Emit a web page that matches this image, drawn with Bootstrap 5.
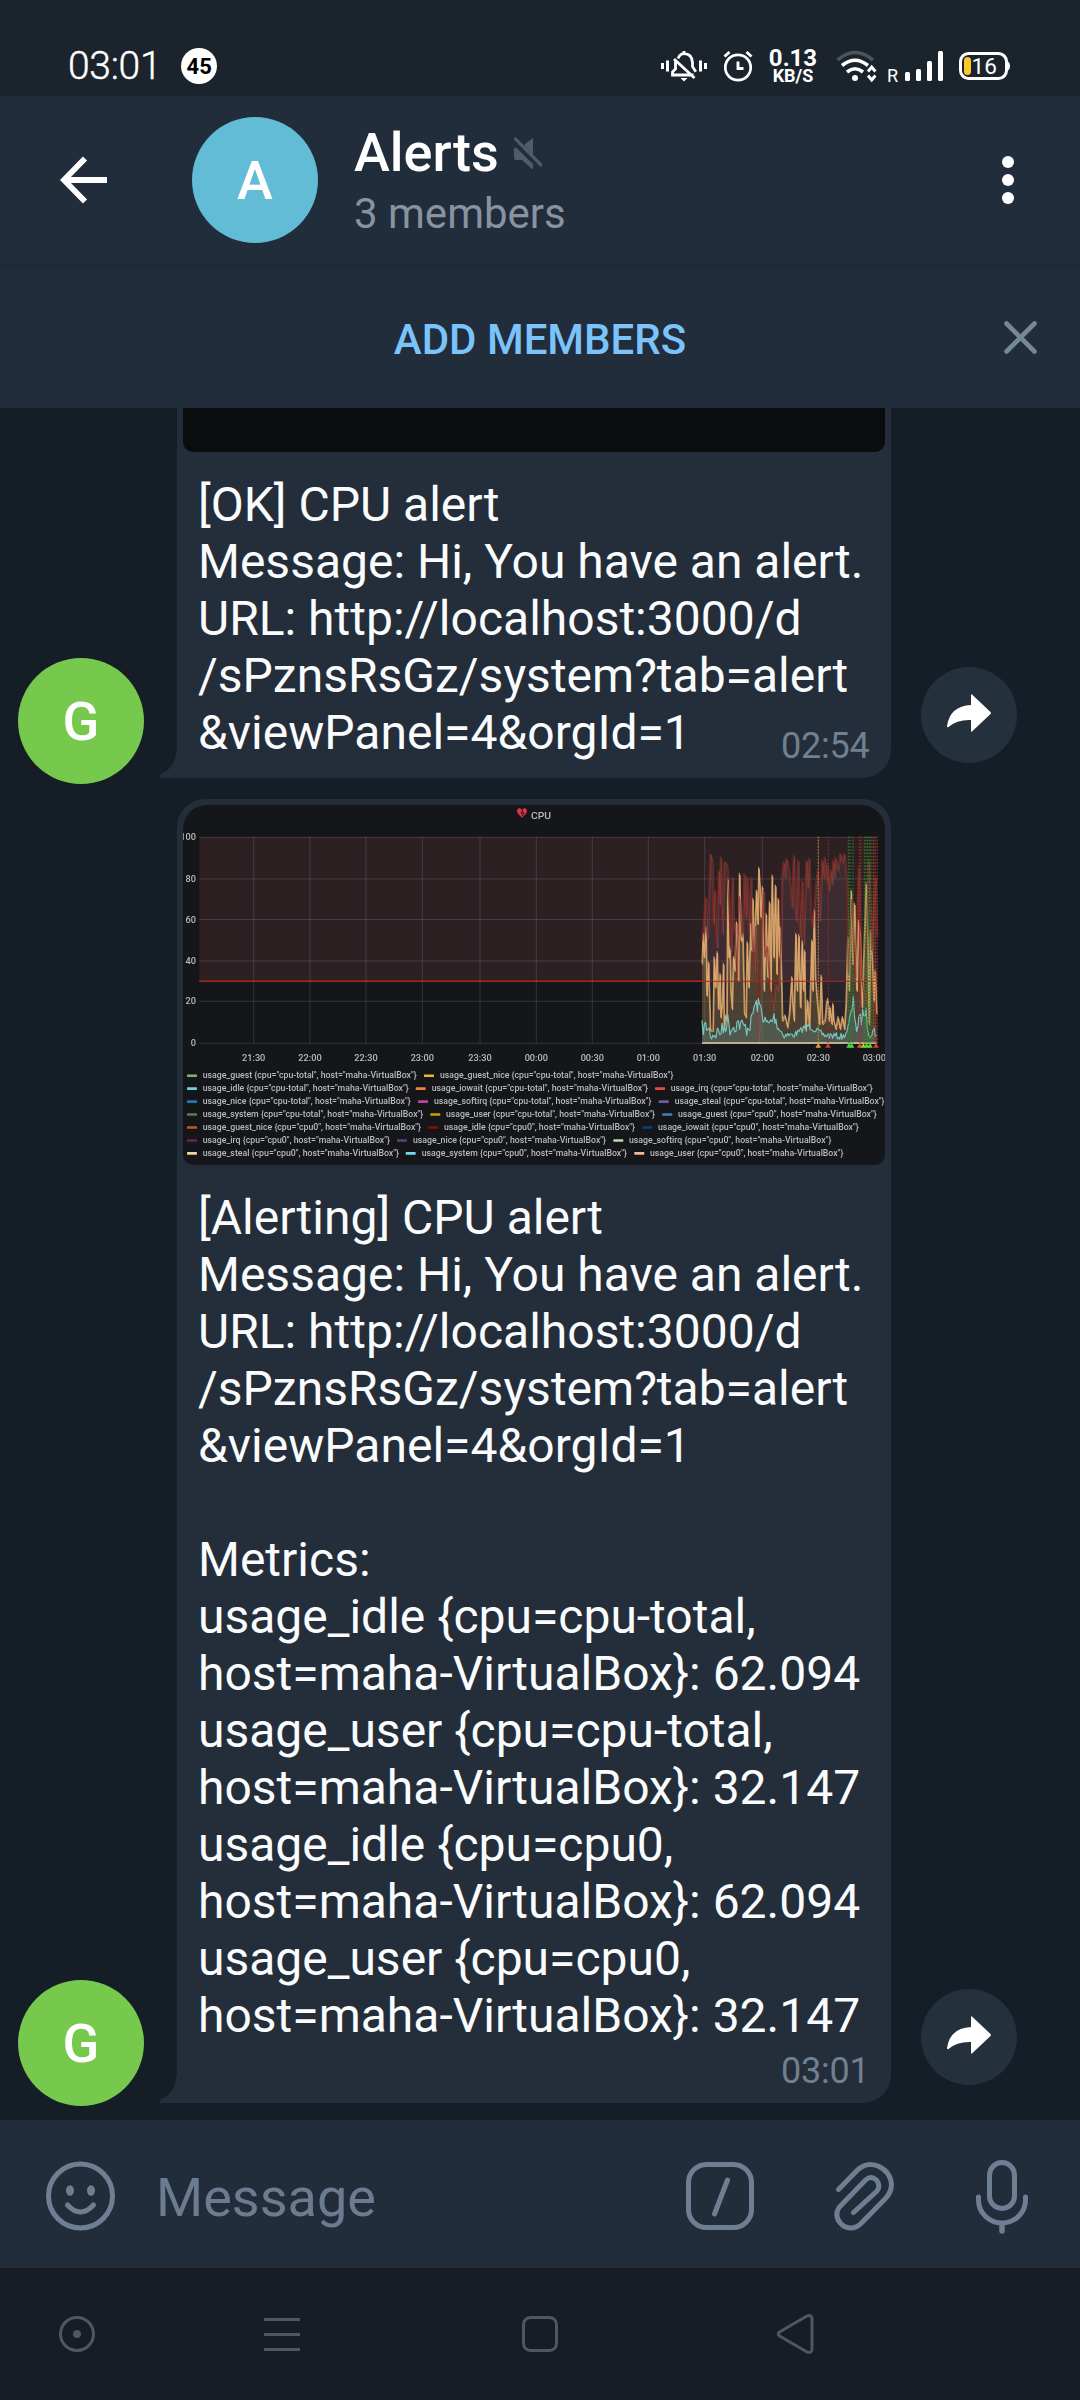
<!DOCTYPE html>
<html lang="en" data-bs-theme="dark">
<head>
<meta charset="utf-8">
<meta name="viewport" content="width=device-width, initial-scale=1">
<title>Alerts</title>
<link href="https://cdn.jsdelivr.net/npm/bootstrap@5.3.0/dist/css/bootstrap.min.css" rel="stylesheet">
<style>
  body { width:1080px; height:2400px; overflow:hidden; background:#161d26; font-family:Roboto,"Noto Sans",sans-serif; color:#fafbfc; }
  svg { display:block; flex:none; }
  .statusbar { height:96px; background:#1b242d; padding:48px 70px 0 68px; }
  .clock { font-size:39px; line-height:36px; font-weight:300; letter-spacing:-.3px; -webkit-text-stroke:.4px #fff; }
  .count { width:36px; height:36px; margin-left:20px; background:#fff; color:#000; font-size:22px; font-weight:700; }
  .rate { width:50px; font-weight:700; line-height:1; text-align:center; }
  .rate-num { font-size:24px; line-height:20px; }
  .rate-unit { font-size:18px; line-height:16px; }
  .topbar { height:168px; background:#212d3b; padding-left:60px; padding-right:60px; }
  .face { width:126px; height:126px; border-radius:50%; font-size:54px; font-weight:500; color:#fff; flex:none; }
  .face-a { background:#62bcd6; margin-left:85px; }
  .face-g { background:#77c94e; margin-left:18px; margin-bottom:-6px; }
  .chat-title { font-size:54px; line-height:62px; font-weight:500; color:#fff; }
  .chat-sub { font-size:42px; line-height:50px; color:#8793a0; margin-top:5px; }
  .addbar { height:144px; background:#212d3b; border-top:3px solid #1e2935; padding-right:43px; }
  .add-label { font-size:42px; font-weight:500; color:#7bc3fb; padding:4px 0 0 76px; }
  .feed { height:1712px; background:#151e27; overflow:hidden; }
  .bubble { position:relative; width:714px; margin-left:33px; background:#232e3a; padding:0 6px 11px; border-radius:28px 28px 28px 0; flex:none; }
  .bubble.cut { border-top-left-radius:0; border-top-right-radius:0; }
  .tail { position:absolute; left:-17px; bottom:0; }
  .shot-cut { height:44px; background:#0a0c0e; border-radius:0 0 10px 10px; }
  .shot { height:360px; background:#141619; border-radius:24px 24px 10px 10px; overflow:hidden; }
  .copy { padding:24px 0 0 15px; font-size:48px; line-height:57px; white-space:nowrap; }
  .stamp { font-size:36px; line-height:42px; color:#708090; padding-left:598px; margin-top:6px; letter-spacing:-.2px; }
  .stamp.inline-stamp { margin-top:-36px; }
  .share { width:96px; height:96px; border-radius:50%; background:#24303c; margin-left:30px; flex:none; }
  .next-msg { margin-top:21px; }
  .composer { height:148px; background:#212d3b; padding:3px 52px 0 46px; }
  .composer-text { font-size:54px; color:#6b7c90; margin-left:40px; line-height:64px; padding-top:4px; }
  .sysnav { height:132px; padding-left:58px; }
</style>
</head>
<body>
<div class="statusbar d-flex align-items-start text-white">
  <span class="clock">03:01</span>
  <span class="count rounded-circle d-flex align-items-center justify-content-center">45</span>
  <div class="ms-auto d-flex align-items-center">
    <svg width="46" height="36" viewBox="0 0 46 36" fill="none" stroke="#fff" stroke-width="2.8">
      <path d="M1.5 15v6M6.5 12.500v11M39.500 12.500v11M44.500 15v6" stroke-width="3"/>
      <path d="M17 10.500q2-4.800 6-4.800 8 0 8.500 9v4l3.300 5M14.500 12q0 5 0 9l-3 3v3h21M23 3v3M13 11l20.500 19" />
      <path d="M19.500 30h7l-3.500 3.500z" fill="#fff" stroke="none"/>
    </svg>
    <svg class="ms-3" width="30" height="36" viewBox="0 0 30 36" fill="none" stroke="#fff" stroke-width="2.700">
      <circle cx="15" cy="19.500" r="12.700"/><path d="M15 13.500v7h5.500M1.500 8.500l5-4.500M28.500 8.500l-5-4.500" stroke-width="2.900"/>
    </svg>
    <div class="rate" style="margin-left:15px"><div class="rate-num">0.13</div><div class="rate-unit">KB/S</div></div>
    <svg style="margin-left:18px" width="44" height="36" viewBox="0 0 44 36" fill="none" stroke="#fff" stroke-width="3.600">
      <path d="M1.500 12Q19 -3 37 12" stroke="#4b555e"/>
      <path d="M6 17.500q13-10.500 26 0M11 24q8-6.500 16 0"/>
      <circle cx="19" cy="30" r="3" fill="#fff" stroke="none"/>
      <path d="M32 23.500l3.700-4.500 3.700 4.500M32 27.500l3.700 4.500 3.700-4.500" stroke-width="3"/>
    </svg>
    <svg style="margin-left:7px" width="60" height="36" viewBox="0 0 60 36" fill="#fff">
      <text x="0" y="34" font-size="18" font-family="Roboto,sans-serif">R</text>
      <rect x="18" y="24" width="5" height="9" rx="1.500"/><rect x="29" y="21" width="5" height="12" rx="1.500"/><rect x="40" y="13" width="5" height="20" rx="1.500"/><rect x="51" y="3" width="5" height="30" rx="1.500"/>
    </svg>
    <svg style="margin-left:12px" width="51" height="36" viewBox="0 0 51 36">
      <rect x="1.500" y="5.500" width="46" height="25" rx="8" fill="none" stroke="#fff" stroke-width="3"/>
      <path d="M48 13q3 1 3 5t-3 5z" fill="#fff"/>
      <rect x="5" y="9" width="7" height="18" rx="3.500" fill="#fbc926"/>
      <text x="12.500" y="26" font-size="22.500" font-family="Roboto,sans-serif" fill="#fff">16</text>
    </svg>
  </div>
</div>

<header class="topbar d-flex align-items-center">
  <svg width="47" height="48" viewBox="0 0 47 48" fill="none" stroke="#fff" stroke-width="5.800"><path d="M47 24H6M25 2.500L4 24l21 21.500"/></svg>
  <div class="face face-a d-flex align-items-center justify-content-center">A</div>
  <div style="margin-left:36px">
    <div class="chat-title d-flex align-items-center">Alerts
      <svg style="margin-left:15px" width="28" height="32" viewBox="0 0 28 32" fill="#4d5d69"><path d="M0 11h2.500L19 27v5h-1L8 23H2q-2 0-2-2zM10 8l9-7v17z"/><path d="M1.500 2l25.500 26" stroke="#4d5d69" stroke-width="3.200" stroke-linecap="round"/></svg>
    </div>
    <div class="chat-sub">3 members</div>
  </div>
  <svg class="ms-auto" style="margin-right:6px" width="12" height="48" viewBox="0 0 12 48" fill="#fff"><circle cx="6" cy="6" r="6"/><circle cx="6" cy="24" r="6"/><circle cx="6" cy="42" r="6"/></svg>
</header>

<div class="addbar d-flex align-items-center">
  <div class="add-label flex-grow-1 text-center">ADD MEMBERS</div>
  <svg width="33" height="33" viewBox="0 0 33 33" stroke="#748899" stroke-width="4.600" stroke-linecap="round"><path d="M2.500 2.500l28 28M30.500 2.500l-28 28"/></svg>
</div>

<main class="feed">
  <div class="d-flex align-items-end">
    <div class="face face-g d-flex align-items-center justify-content-center">G</div>
    <div class="bubble cut">
      <svg class="tail" width="18" height="36" viewBox="0 0 18 36" fill="#232e3a"><path d="M17 0v1Q17 26 1 32q-2 2 0 4h17V0z"/></svg>
      <div class="shot-cut"></div>
      <div class="copy">[OK] CPU alert<br>Message: Hi, You have an alert.<br>URL: http://localhost:3000/d<br>/sPznsRsGz/system?tab=alert<br>&amp;viewPanel=4&amp;orgId=1</div>
      <div class="stamp inline-stamp">02:54</div>
    </div>
    <div class="share d-flex align-items-center justify-content-center" style="margin-bottom:15px">
      <svg width="44" height="38" viewBox="0 0 44 38" fill="#fff" style="margin-top:-4px"><path d="M24 1q0-1 1-.5L43.500 18q.8 1 0 2L25 37.500q-1 .5-1-.5V26Q10 25.500 1.500 33 0 34 0 32 3 12 24 11z"/></svg>
    </div>
  </div>

  <div class="next-msg d-flex align-items-end">
    <div class="face face-g d-flex align-items-center justify-content-center" style="margin-bottom:-3px">G</div>
    <div class="bubble" style="padding-top:6px">
      <svg class="tail" width="18" height="36" viewBox="0 0 18 36" fill="#232e3a"><path d="M17 0v1Q17 26 1 32q-2 2 0 4h17V0z"/></svg>
      <div class="shot">
        <svg id="chart" width="702" height="360" viewBox="0 0 702 360" font-family="Roboto,sans-serif" font-size="9.200" font-weight="500" fill="#b9bbbe" style="filter:blur(.35px)">
          <path d="M330 6c2-3 5-2 5 1 0 3-4 5-5 7-1-2-5-4-5-7 0-3 3-4 5-1z" transform="translate(9 -1)" fill="#e0314c"/>
          <path d="M340 5l-2 3h3l-2 3" stroke="#141619" stroke-width="1" fill="none"/>
          <text x="348" y="13.700" font-size="9.800" textLength="20" lengthAdjust="spacingAndGlyphs">CPU</text>
          <rect x="16.300" y="32" width="677.400" height="144.300" fill="#2d2023"/>
          <g id="grid" stroke="#c8c8dc" stroke-opacity=".17" stroke-width="1"></g>
          <g id="series" transform="translate(347 -15) scale(.33333)" fill="none" stroke-linejoin="round"></g>
          <path d="M16.300 176.300H521" stroke="#a52b20" stroke-width="1.400"/>
          <path d="M521 176.300H693" stroke="#a52b20" stroke-width="1.200" stroke-opacity=".8"/>
          <g id="marks"></g>
          <g id="axis"></g>
          <g id="legend" font-size="8.600"></g>
        </svg>
      </div>
      <div class="copy">[Alerting] CPU alert<br>Message: Hi, You have an alert.<br>URL: http://localhost:3000/d<br>/sPznsRsGz/system?tab=alert<br>&amp;viewPanel=4&amp;orgId=1<br><br>Metrics:<br>usage_idle {cpu=cpu-total,<br>host=maha-VirtualBox}: 62.094<br>usage_user {cpu=cpu-total,<br>host=maha-VirtualBox}: 32.147<br>usage_idle {cpu=cpu0,<br>host=maha-VirtualBox}: 62.094<br>usage_user {cpu=cpu0,<br>host=maha-VirtualBox}: 32.147</div>
      <div class="stamp">03:01</div>
    </div>
    <div class="share d-flex align-items-center justify-content-center" style="margin-bottom:18px">
      <svg width="44" height="38" viewBox="0 0 44 38" fill="#fff" style="margin-top:-4px"><path d="M24 1q0-1 1-.5L43.500 18q.8 1 0 2L25 37.500q-1 .5-1-.5V26Q10 25.500 1.500 33 0 34 0 32 3 12 24 11z"/></svg>
    </div>
  </div>
</main>

<footer class="composer d-flex align-items-center">
  <svg width="70" height="70" viewBox="0 0 70 70" fill="none" stroke="#6f7f93" stroke-width="5"><circle cx="34.500" cy="35" r="32"/><path d="M21.500 44q13 14 26 0" stroke-linecap="round"/><ellipse cx="24" cy="29.500" rx="4" ry="5.200" fill="#6f7f93" stroke="none"/><ellipse cx="45" cy="29.500" rx="4" ry="5.200" fill="#6f7f93" stroke="none"/></svg>
  <div class="composer-text">Message</div>
  <div class="ms-auto d-flex align-items-center">
    <svg width="68" height="72" viewBox="0 0 68 72" fill="none" stroke="#6f7f93" stroke-width="5" stroke-linecap="round"><rect x="2.500" y="4.500" width="63" height="63" rx="18"/><path d="M41.500 20L28.500 54"/></svg>
    <svg style="margin-left:80px" width="60" height="72" viewBox="0 0 60 72" fill="none" stroke="#6f7f93" stroke-width="5" stroke-linecap="round"><path d="M4.500 29.500L23 10.500Q32 1.500 44 6 57 12 57.500 25 57 33 51 39L27 63.500Q19 71 9.500 66-1 57.500 5 47.500L31.500 20Q37 15 42.500 20 47 26 43 31L19.500 52.500"/></svg>
    <svg style="margin-left:82px" width="52" height="76" viewBox="0 0 52 76" fill="none" stroke="#6f7f93" stroke-width="5" stroke-linecap="round"><rect x="13.500" y="4.500" width="25" height="46" rx="12.500"/><path d="M2.500 39v3a23.500 23 0 0 0 47 0v-3"/><path d="M26 66v7" stroke-width="5.500"/></svg>
  </div>
</footer>

<nav class="sysnav d-flex align-items-center">
  <svg width="38" height="40" viewBox="0 0 38 40" fill="none" stroke="#50575f" stroke-width="3"><circle cx="19" cy="20" r="16.500"/><circle cx="19" cy="20" r="4" fill="#50575f" stroke="none"/></svg>
  <svg style="margin-left:168px" width="36" height="40" viewBox="0 0 36 40" stroke="#50575f" stroke-width="3"><path d="M0 5.500h36M0 20.500h36M0 35.500h36"/></svg>
  <svg style="margin-left:222px" width="36" height="40" viewBox="0 0 36 40" fill="none" stroke="#50575f" stroke-width="3"><rect x="1.500" y="3.500" width="33" height="33" rx="7"/></svg>
  <svg style="margin-left:218px" width="40" height="42" viewBox="0 0 40 42" fill="none" stroke="#50575f" stroke-width="3" stroke-linejoin="round"><path d="M3.500 19L31 3q4.500-1.500 5 2.500v31q-.5 4-5 2.500L3.500 23q-2.500-2 0-4z"/></svg>
</nav>

<script>
  const el = id => document.getElementById(id);
  const gx = [70.7,127,183,239.3,297,353.3,409.3,465.3,521.7,579.3,635.3];
  const gy = [32.3,73.9,114.5,156,196.3,238.3];
  el('grid').innerHTML = gx.map(x => `<path d="M${x} 32V238.300"/>`).join('') + gy.map(y => `<path d="M16.300 ${y}H693.700"/>`).join('');
  el('axis').innerHTML =
    ['21:30','22:00','22:30','23:00','23:30','00:00','00:30','01:00','01:30','02:00','02:30','03:00'].map((t,i) =>
      `<text x="${[...gx,691.300][i]}" y="255.500" text-anchor="middle">${t}</text>`).join('') +
    ['100','80','60','40','20','0'].map((t,i) => `<text x="12.900" y="${gy[i]+3}" text-anchor="end">${t}</text>`).join('');

  // CPU samples: alternating x, y pairs
  const user = [516,520,519,430,522,500,528,410,530,615,535,515,541,720,549,720,552,500,556,590,561,485,565,655,570,550,572,680,577,630,580,520,582,715,586,675,590,690,593,265,596,500,600,470,602,600,606,655,610,500,614,540,619,395,625,570,628,250,633,450,638,430,643,670,648,680,651,455,656,590,662,400,665,480,668,325,673,480,679,300,683,400,686,232,690,300,692,380,697,290,702,600,708,370,713,560,718,335,722,600,726,255,731,500,736,285,740,550,744,325,748,500,750,410,755,600,757,690,765,675,772,710,778,670,785,560,788,640,792,690,797,430,801,600,806,433,811,650,816,450,820,600,823,480,827,720,832,630,838,710,845,450,848,600,852,358,856,560,862,640,868,700,873,555,877,700,885,690,889,640,893,625,896,690,899,650,905,700,908,640,911,690,917,715,924,680,930,715,937,680,943,715,948,640,953,440,957,600,963,300,968,520,973,340,977,480,980,600,985,390,990,430,996,650,1001,500,1008,280,1013,460,1017,700,1021,420,1027,520,1031,630,1035,540,1040,670];
  const idle = [516,450,526,320,529,420,532,440,540,190,546,210,549,400,553,300,556,420,560,470,565,240,568,340,571,200,576,430,582,215,590,220,596,330,602,480,606,260,611,420,615,400,620,560,628,320,636,440,642,250,646,380,650,260,655,420,662,260,666,440,672,540,676,410,680,600,684,755,688,700,690,560,700,300,705,500,712,470,720,600,728,660,735,580,742,600,752,480,755,260,760,215,764,260,768,205,776,240,785,350,790,195,794,340,797,390,803,210,807,390,810,440,815,270,820,460,828,210,832,290,836,205,842,380,848,410,855,300,862,240,868,390,875,210,879,260,883,200,888,270,892,220,895,300,902,240,905,280,908,210,912,260,915,200,922,240,930,190,936,215,942,190,950,290,955,550,965,330,975,560,985,230,990,460,995,560,1005,640,1015,210,1025,480,1030,340,1035,260,1040,440];
  const sysKeys = [516,715,530,710,545,735,565,725,580,720,593,690,600,715,625,700,650,715,663,700,672,650,682,645,695,655,702,695,715,705,735,680,745,710,760,735,790,735,810,725,830,705,850,715,880,735,940,740,955,715,970,640,980,715,1005,660,1015,715,1040,730];
  let seed = 7;
  const rnd = () => (seed = (seed * 16807) % 2147483647) / 2147483647;
  const system = [];
  for (let i = 0; i < sysKeys.length - 2; i += 2) {
    const [x0,y0,x1,y1] = sysKeys.slice(i, i + 4);
    const n = Math.max(2, Math.round((x1 - x0) / 3.5));
    const amp = x0 > 745 && x0 < 950 ? 20 : 48;
    for (let k = 0; k < n; k++) system.push(x0 + (x1 - x0) * k / n, Math.min(748, y0 + (y1 - y0) * k / n + (rnd() - .5) * amp));
  }
  system.push(1040, 735);
  const line = a => 'M' + a.map((v,i) => v.toFixed(0) + (i % 2 ? ' ' : ',')).join('');
  const area = a => line(a) + 'L1040,760L516,760Z';
  el('series').innerHTML =
    `<path d="${area(idle)}" fill="#70566a" fill-opacity=".22"/>
     <path d="${area(user)}" fill="#85703c" fill-opacity=".38"/><path d="${line(user)}" stroke="#d5ac5b" stroke-width="3.600" stroke-opacity=".85"/>
     <path d="${line(user)}" stroke="#efad7e" stroke-width="3" transform="translate(2 5)" stroke-opacity=".75"/>
     <path d="${line(idle)}" stroke="#8f241e" stroke-width="3.800" stroke-opacity=".72"/>
     <path d="${line(idle)}" stroke="#915a55" stroke-width="2.500" stroke-opacity=".45" transform="translate(4 5)"/>
     <path d="${area(system)}" fill="#70dbed" fill-opacity=".16"/><path d="${line(system)}" stroke="#72c7c0" stroke-width="3.500"/>
     <path d="M516 759H1040" stroke="#e6d3ac" stroke-width="5"/>`;

  const marks = [[865,'#c98a2e'],[895,'#a52d28'],[955,'#238a2b'],[960,'#238a2b'],[969,'#238a2b'],[989,'#b62f25'],[993,'#b62f25'],[1003,'#348b2d'],[1008,'#348b2d'],[1013,'#348b2d'],[1018,'#348b2d'],[1023,'#348b2d'],[1030,'#8a6a2a'],[1036,'#c02e20'],[1042,'#c02e20']];
  const tips = [[865,'#f09a30'],[894,'#e3342b'],[957,'#39e039'],[965,'#39e039'],[989,'#ed4b31'],[1000,'#8ed22e'],[1010,'#5fd730'],[1020,'#5fd730'],[1038,'#f0382b']];
  el('marks').innerHTML = marks.map(([x,c]) => `<path d="M${x/3+347} 31.500V238" stroke="${c}" stroke-width="1.100" stroke-opacity=".85" stroke-dasharray="1.600 1.600"/>`).join('')
    + tips.map(([x,c]) => `<path d="M${x/3+344.200} 242.800h5.600l-2.800-4.800z" fill="${c}"/>`).join('');

  // legend rows: dash x, text x, text end, colour, metric, cpu
  const legend = [
    [[4,19.7,233.7,'#7eb26d','guest','cpu-total'],[241,257,490.3,'#eab839','guest_nice','cpu-total']],
    [[4,19.7,225.7,'#6ed0e0','idle','cpu-total'],[232.7,248.7,465,'#ef843c','iowait','cpu-total'],[472,487.7,689.7,'#e24d42','irq','cpu-total']],
    [[4,19.7,227.7,'#1f78c1','nice','cpu-total'],[235,251,468.3,'#ba43a9','softirq','cpu-total'],[475.7,491.7,701.5,'#705da0','steal','cpu-total']],
    [[4,19.7,240.3,'#508642','system','cpu-total'],[247.3,263,472,'#cca300','user','cpu-total'],[479.3,495,693.7,'#447ebc','guest','cpu0']],
    [[4,19.7,238,'#c15c17','guest_nice','cpu0'],[245.3,261,452,'#890f02','idle','cpu0'],[459.3,475,675.7,'#0a437c','iowait','cpu0']],
    [[4,19.7,207,'#6d1f62','irq','cpu0'],[214,230,423,'#584477','nice','cpu0'],[430.3,446,648.3,'#b7dbab','softirq','cpu0']],
    [[4,19.7,216,'#f4d598','steal','cpu0'],[222.7,238.7,444,'#70dbed','system','cpu0'],[451.3,467,660.3,'#f9ba8f','user','cpu0']]
  ];
  el('legend').innerHTML = legend.map((row,i) => row.map(([d,x,e,c,m,cpu]) =>
    `<rect x="${d}" y="${269.4+i*12.95}" width="10" height="2.600" rx=".6" fill="${c}"/><text x="${x}" y="${273.2+i*12.95}" textLength="${(e-x).toFixed(1)}" lengthAdjust="spacingAndGlyphs">usage_${m} {cpu="${cpu}", host="maha-VirtualBox"}</text>`).join('')).join('');
</script>
<script src="https://cdn.jsdelivr.net/npm/bootstrap@5.3.0/dist/js/bootstrap.bundle.min.js"></script>
</body>
</html>
